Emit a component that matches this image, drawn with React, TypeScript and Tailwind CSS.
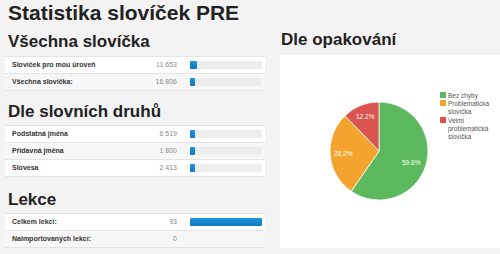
import React from "react";

type Row = { label: string; value: string; pct: number | null };

const sections: { title: string; pad: string; rows: Row[] }[] = [
  {
    title: "Všechna slovíčka",
    pad: "pt-[7px] pb-[4px]",
    rows: [
      { label: "Slovíček pro mou úroveň", value: "11 653", pct: 10 },
      { label: "Všechna slovíčka:", value: "16 806", pct: 7 },
    ],
  },
  {
    title: "Dle slovních druhů",
    pad: "pt-[11px] pb-[3px]",
    rows: [
      { label: "Podstatná jména", value: "6 519", pct: 7 },
      { label: "Přídavná jména", value: "1 800", pct: 7 },
      { label: "Slovesa", value: "2 413", pct: 7 },
    ],
  },
  {
    title: "Lekce",
    pad: "pt-[13px] pb-[3px]",
    rows: [
      { label: "Celkem lekcí:", value: "93", pct: 100 },
      { label: "Naimportovaných lekcí:", value: "0", pct: null },
    ],
  },
];

function StatTable({ rows }: { rows: Row[] }) {
  return (
    <div className="border-b border-[#e4e4e4]">
      {rows.map((r, i) => (
        <div
          key={i}
          className={`flex h-[17px] items-center border-t border-[#e4e4e4] ${i % 2 === 0 ? "bg-white" : "bg-[#f7f7f7]"}`}
        >
          <div className="w-[120px] pl-[7px] text-[7px] font-bold text-[#333]">{r.label}</div>
          <div className="w-[52px] text-right text-[7px] text-[#888]">{r.value}</div>
          <div className="ml-[13px] w-[72px]">
            {r.pct !== null && (
              <div className="h-[8px] w-full rounded-[1px] bg-[#ededed]">
                <div
                  className="h-full rounded-[1px] bg-gradient-to-b from-[#1e95dc] to-[#0f78c0]"
                  style={{ width: `${r.pct}%` }}
                />
              </div>
            )}
          </div>
        </div>
      ))}
    </div>
  );
}

function Pie() {
  const cx = 99;
  const cy = 96;
  const r = 49;
  const data = [
    { v: 59.6, color: "#5cb85c" },
    { v: 28.2, color: "#f5a32f" },
    { v: 12.2, color: "#d9534f" },
  ];
  let acc = 0;
  const pt = (p: number) => {
    const a = (p / 100) * Math.PI * 2;
    return [cx + r * Math.sin(a), cy - r * Math.cos(a)];
  };
  return (
    <svg width="220" height="193" viewBox="0 0 220 193">
      {data.map((d, i) => {
        const [x1, y1] = pt(acc);
        const [x2, y2] = pt(acc + d.v);
        const large = d.v > 50 ? 1 : 0;
        acc += d.v;
        return (
          <path
            key={i}
            d={`M${cx},${cy} L${x1},${y1} A${r},${r} 0 ${large} 1 ${x2},${y2} Z`}
            fill={d.color}
            stroke="#fff"
            strokeWidth="0.8"
          />
        );
      })}
      <g fontFamily="'Liberation Sans', Arial, sans-serif" fontSize="6.5" fill="#fff">
        <text x="122" y="110">59.6%</text>
        <text x="54" y="101">28.2%</text>
        <text x="76" y="64">12.2%</text>
      </g>
      <g fontFamily="'Liberation Sans', Arial, sans-serif" fontSize="6.5" fill="#555">
        <rect x="160" y="37" width="6" height="6" fill="#5cb85c" />
        <text x="168" y="42.5">Bez chyby</text>
        <rect x="160" y="45" width="6" height="6" fill="#f5a32f" />
        <text x="168" y="50.5">Problematická</text>
        <text x="168" y="58.5">slovíčka</text>
        <rect x="160" y="62" width="6" height="6" fill="#d9534f" />
        <text x="168" y="67.5">Velmi</text>
        <text x="168" y="75.5">problematická</text>
        <text x="168" y="83.5">slovíčka</text>
      </g>
    </svg>
  );
}

export default function App() {
  return (
    <div className="h-[254px] w-[500px] overflow-hidden bg-[#f3f3f3] font-['Liberation_Sans',Arial,sans-serif] text-[#222]">
      <h1 className="pl-[8px] pt-[1px] text-[21px] font-bold leading-[24px]">Statistika slovíček PRE</h1>
      <div className="flex">
        <div className="ml-[5px] w-[260px]">
          {sections.map((s, i) => (
            <div key={i}>
              <h2 className={`pl-[3px] text-[17px] font-bold leading-[20px] ${s.pad}`}>{s.title}</h2>
              <StatTable rows={s.rows} />
            </div>
          ))}
        </div>
        <div className="ml-[15px] flex-1">
          <h2 className="pl-[1px] pt-[5px] pb-[5px] text-[17px] font-bold leading-[20px]">Dle opakování</h2>
          <div className="h-[193px] bg-white">
            <Pie />
          </div>
        </div>
      </div>
    </div>
  );
}
